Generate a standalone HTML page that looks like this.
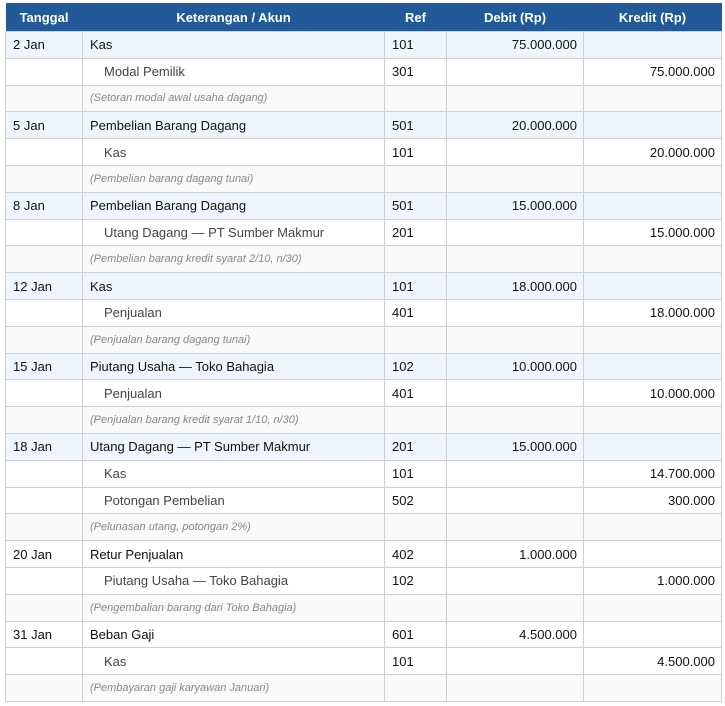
<!DOCTYPE html>
<html><head><style>
body{margin:0;background:#fff;font-family:"Liberation Sans",Arial,sans-serif;font-size:13px;color:#111}
table{position:absolute;left:5px;top:3px;border-collapse:collapse;width:716px;table-layout:fixed}
th{background:#215a96;color:#fff;font-weight:bold;height:28px;padding:0;text-align:center;font-size:13px}
td{border:1px solid #cfcfcf;height:26.8px;padding:0 7px;box-sizing:border-box;white-space:nowrap}
tr.d td{background:#eef5fd}
tr.m td{background:#f9f9f9}
td.n{text-align:right;padding-right:6px}
td.i{padding-left:21px;color:#444}
td.memo{font-style:italic;color:#888;font-size:11px}
</style></head><body>
<table>
<colgroup><col style="width:77px"><col style="width:302px"><col style="width:62px"><col style="width:137px"><col style="width:138px"></colgroup>
<tr><th>Tanggal</th><th>Keterangan / Akun</th><th>Ref</th><th>Debit (Rp)</th><th>Kredit (Rp)</th></tr>
<tr class="d"><td>2 Jan</td><td>Kas</td><td>101</td><td class="n">75.000.000</td><td></td></tr>
<tr><td></td><td class="i">Modal Pemilik</td><td>301</td><td></td><td class="n">75.000.000</td></tr>
<tr class="m"><td></td><td class="memo">(Setoran modal awal usaha dagang)</td><td></td><td></td><td></td></tr>
<tr class="d"><td>5 Jan</td><td>Pembelian Barang Dagang</td><td>501</td><td class="n">20.000.000</td><td></td></tr>
<tr><td></td><td class="i">Kas</td><td>101</td><td></td><td class="n">20.000.000</td></tr>
<tr class="m"><td></td><td class="memo">(Pembelian barang dagang tunai)</td><td></td><td></td><td></td></tr>
<tr class="d"><td>8 Jan</td><td>Pembelian Barang Dagang</td><td>501</td><td class="n">15.000.000</td><td></td></tr>
<tr><td></td><td class="i">Utang Dagang — PT Sumber Makmur</td><td>201</td><td></td><td class="n">15.000.000</td></tr>
<tr class="m"><td></td><td class="memo">(Pembelian barang kredit syarat 2/10, n/30)</td><td></td><td></td><td></td></tr>
<tr class="d"><td>12 Jan</td><td>Kas</td><td>101</td><td class="n">18.000.000</td><td></td></tr>
<tr><td></td><td class="i">Penjualan</td><td>401</td><td></td><td class="n">18.000.000</td></tr>
<tr class="m"><td></td><td class="memo">(Penjualan barang dagang tunai)</td><td></td><td></td><td></td></tr>
<tr class="d"><td>15 Jan</td><td>Piutang Usaha — Toko Bahagia</td><td>102</td><td class="n">10.000.000</td><td></td></tr>
<tr><td></td><td class="i">Penjualan</td><td>401</td><td></td><td class="n">10.000.000</td></tr>
<tr class="m"><td></td><td class="memo">(Penjualan barang kredit syarat 1/10, n/30)</td><td></td><td></td><td></td></tr>
<tr class="d"><td>18 Jan</td><td>Utang Dagang — PT Sumber Makmur</td><td>201</td><td class="n">15.000.000</td><td></td></tr>
<tr><td></td><td class="i">Kas</td><td>101</td><td></td><td class="n">14.700.000</td></tr>
<tr><td></td><td class="i">Potongan Pembelian</td><td>502</td><td></td><td class="n">300.000</td></tr>
<tr class="m"><td></td><td class="memo">(Pelunasan utang, potongan 2%)</td><td></td><td></td><td></td></tr>
<tr><td>20 Jan</td><td>Retur Penjualan</td><td>402</td><td class="n">1.000.000</td><td></td></tr>
<tr><td></td><td class="i">Piutang Usaha — Toko Bahagia</td><td>102</td><td></td><td class="n">1.000.000</td></tr>
<tr class="m"><td></td><td class="memo">(Pengembalian barang dari Toko Bahagia)</td><td></td><td></td><td></td></tr>
<tr><td>31 Jan</td><td>Beban Gaji</td><td>601</td><td class="n">4.500.000</td><td></td></tr>
<tr><td></td><td class="i">Kas</td><td>101</td><td></td><td class="n">4.500.000</td></tr>
<tr class="m"><td></td><td class="memo">(Pembayaran gaji karyawan Januari)</td><td></td><td></td><td></td></tr>
</table>
</body></html>
